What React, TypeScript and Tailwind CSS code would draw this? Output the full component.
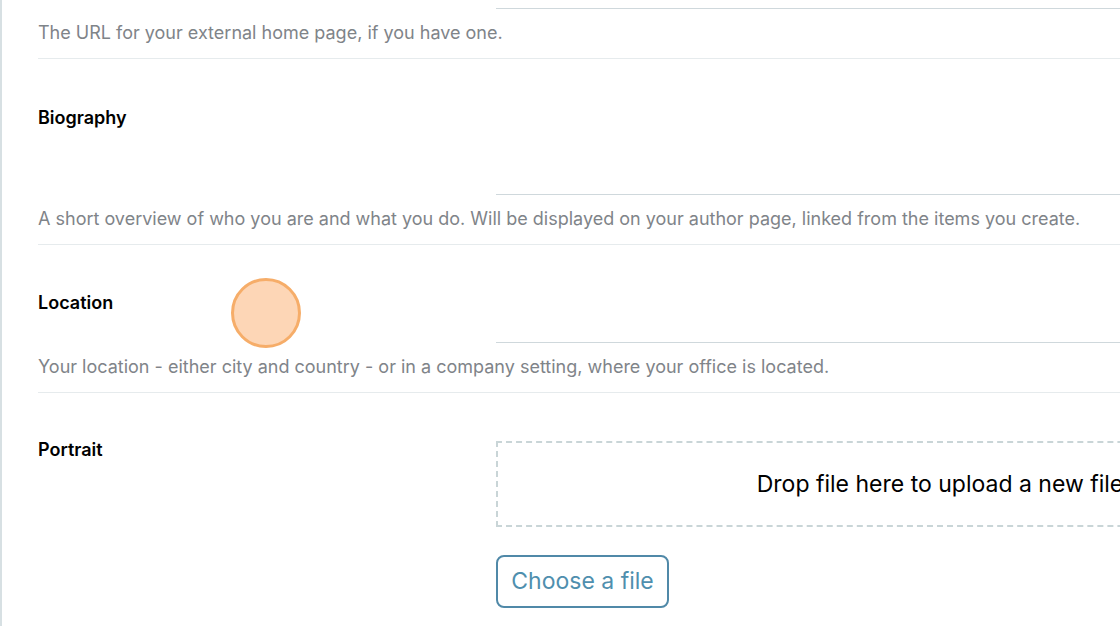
export default function App() {
  return (
    <div className="relative w-[1120px] h-[626px] overflow-hidden bg-white font-['Inter',sans-serif]">
      <div className="w-[1384px] h-full border-l-2 border-[#d7e0e3] pl-[36px]">
        {/* website (cut off at the top) */}
        <div className="border-b border-[#e6ebed]">
          <div className="ml-[458px] h-[9px] border-b border-[#cfd8dc]" />
          <p className="mt-[12px] pb-[13px] text-[18px] leading-6 text-[#7f8489]">
            The URL for your external home page, if you have one.
          </p>
        </div>

        {/* biography */}
        <div className="border-b border-[#e6ebed]">
          <div className="flex items-start pt-[47px]">
            <label className="w-[458px] shrink-0 text-[18px] leading-6 font-semibold text-black">Biography</label>
            <div className="flex-1 h-[89px] border-b border-[#cfd8dc]" />
          </div>
          <p className="mt-[12px] pb-[13px] text-[18px] leading-6 text-[#7f8489]">
            A short overview of who you are and what you do. Will be displayed on your author page, linked from the items you create.
          </p>
        </div>

        {/* location */}
        <div className="border-b border-[#e6ebed]">
          <div className="flex items-start pt-[46px]">
            <label className="w-[458px] shrink-0 text-[18px] leading-6 font-semibold text-black">Location</label>
            <div className="flex-1 h-[52px] border-b border-[#cfd8dc]" />
          </div>
          <p className="mt-[12px] pb-[13px] text-[18px] leading-6 text-[#7f8489]">
            Your location - either city and country - or in a company setting, where your office is located.
          </p>
        </div>

        {/* portrait */}
        <div className="flex items-start pt-[45px]">
          <label className="w-[458px] shrink-0 text-[18px] leading-6 font-semibold text-black">Portrait</label>
          <div className="flex-1 pt-[3px]">
            <div className="h-[86px] border-2 border-dashed border-[#c9d5d7] flex items-center justify-center text-[23px] text-black">
              Drop file here to upload a new file
            </div>
            <button className="mt-[28px] w-[173px] h-[53px] rounded-lg border-2 border-[#5089a8] text-[23px] text-[#4f8fae]">
              Choose a file
            </button>
          </div>
        </div>
      </div>

      <div className="absolute left-[231px] top-[278px] w-[70px] h-[70px] rounded-full bg-[#fdd6b6] border-[3px] border-[#f6ad69]" />
    </div>
  );
}
